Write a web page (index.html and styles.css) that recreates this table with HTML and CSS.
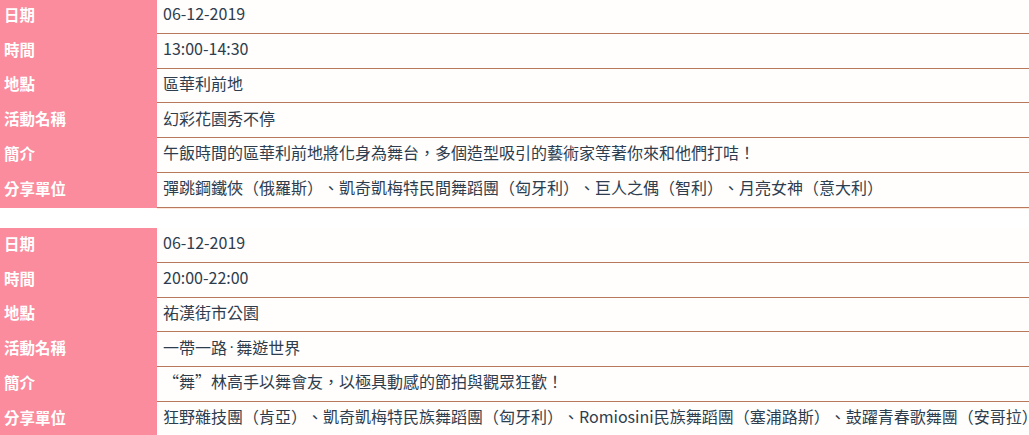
FILE: index.html
```html
<!DOCTYPE html>
<html lang="zh-Hant">
<head>
<meta charset="utf-8">
<title>活動資料</title>
<link rel="stylesheet" href="styles.css">
</head>
<body>
<div class="page">
  <div class="sheet">
    <div class="row"><div class="label">日期</div><div class="value">06-12-2019</div></div>
    <div class="row"><div class="label">時間</div><div class="value">13:00-14:30</div></div>
    <div class="row"><div class="label">地點</div><div class="value">區華利前地</div></div>
    <div class="row"><div class="label">活動名稱</div><div class="value">幻彩花園秀不停</div></div>
    <div class="row"><div class="label">簡介</div><div class="value">午飯時間的區華利前地將化身為舞台，多個造型吸引的藝術家等著你來和他們打咭！</div></div>
    <div class="row"><div class="label">分享單位</div><div class="value">彈跳鋼鐵俠（俄羅斯）、凱奇凱梅特民間舞蹈團（匈牙利）、巨人之偶（智利）、月亮女神（意大利）</div></div>
  </div>
  <div class="sheet">
    <div class="row"><div class="label">日期</div><div class="value">06-12-2019</div></div>
    <div class="row"><div class="label">時間</div><div class="value">20:00-22:00</div></div>
    <div class="row"><div class="label">地點</div><div class="value">祐漢街市公園</div></div>
    <div class="row"><div class="label">活動名稱</div><div class="value">一帶一路<span class="dot">·</span>舞遊世界</div></div>
    <div class="row"><div class="label">簡介</div><div class="value">“舞”林高手以舞會友，以極具動感的節拍與觀眾狂歡！</div></div>
    <div class="row"><div class="label">分享單位</div><div class="value">狂野雜技團（肯亞）、凱奇凱梅特民族舞蹈團（匈牙利）、Romiosini民族舞蹈團（塞浦路斯）、鼓躍青春歌舞團（安哥拉）</div></div>
  </div>
</div>
</body>
</html>
```
FILE: styles.css
```css
html, body {
  margin: 0;
  padding: 0;
  background: #ffffff;
}
body {
  font-family: "Noto Sans CJK TC", "Noto Sans", sans-serif;
  font-size: 16px;
  overflow: hidden;
  text-spacing-trim: space-all;
}
.page {
  display: flex;
  flex-direction: column;
  gap: 20.5px;
  margin-top: -1px;
}
.sheet {
  display: flex;
  flex-direction: column;
}
.row {
  display: grid;
  grid-template-columns: 157px 1fr;
  height: 34.75px;
}
.label {
  background: #fa8c9e;
  color: #ffffff;
  font-weight: 700;
  font-size: 15.5px;
  padding-left: 4px;
  padding-bottom: 5px;
  display: flex;
  align-items: center;
  white-space: nowrap;
}
.value {
  background: #fffefd;
  color: #2e3d4e;
  padding-left: 6px;
  padding-bottom: 5px;
  display: flex;
  align-items: center;
  border-bottom: 1px solid #b7785b;
  box-shadow: 0 1px 0 #fce6da;
  white-space: nowrap;
  overflow: hidden;
}
.dot {
  font-family: "Liberation Sans", sans-serif;
  padding: 0 2px;
}
```
